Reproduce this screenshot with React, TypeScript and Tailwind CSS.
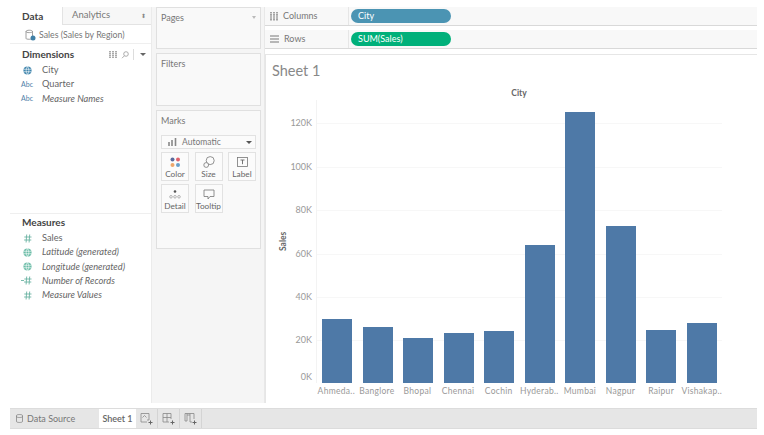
const font = { fontFamily: 'Lato, "Open Sans", "Liberation Sans", sans-serif' };

const bars = [
  { name: "Ahmeda..", top: 319 },
  { name: "Banglore", top: 327 },
  { name: "Bhopal", top: 338 },
  { name: "Chennai", top: 333 },
  { name: "Cochin", top: 331 },
  { name: "Hyderab..", top: 245 },
  { name: "Mumbai", top: 112 },
  { name: "Nagpur", top: 226 },
  { name: "Raipur", top: 330 },
  { name: "Vishakap..", top: 323 },
];

const ticks = [
  { label: "120K", y: 23 },
  { label: "100K", y: 67 },
  { label: "80K", y: 110 },
  { label: "60K", y: 154 },
  { label: "40K", y: 197 },
  { label: "20K", y: 240 },
  { label: "0K", y: 277 },
];

const Globe = ({ color }: { color: string }) => (
  <svg width="9" height="9" viewBox="0 0 10 10" className="shrink-0">
    <circle cx="5" cy="5" r="4.5" fill={color} />
    <path d="M0.8 3.6H9.2M0.8 6.4H9.2M5 .5C3 3 3 7 5 9.5M5 .5C7 3 7 7 5 9.5" stroke="#fff" strokeWidth="0.7" fill="none" />
  </svg>
);

const Hash = ({ prefix }: { prefix?: boolean }) => (
  <svg width="13" height="9" viewBox="0 0 13 9" className="shrink-0">
    <path d="M5.7 .5 5.1 8.5M8.7 .5 8.1 8.5M3.3 3H10.5M3.1 6H10.3" stroke="#6bb3a3" strokeWidth="0.9" fill="none" />
    {prefix && <path d="M0 4.5H3" stroke="#6bb3a3" strokeWidth="0.9" />}
  </svg>
);

const FieldRow = ({ icon, label, italic }: { icon: React.ReactNode; label: string; italic?: boolean }) => (
  <div className="flex h-[14.25px] items-center">
    <div className="flex w-[32px] items-center justify-center pl-[6px] pr-[4px]">{icon}</div>
    <span className={`text-[9.25px] text-[#666] ${italic ? "italic" : ""}`}>{label}</span>
  </div>
);

const Abc = () => <span className="text-[7px] text-[#4f81a8]">Abc</span>;

const MarkButton = ({ icon, label }: { icon: React.ReactNode; label: string }) => (
  <div className="flex h-[29px] w-[28px] flex-col items-center justify-between border border-[#e2e2e2] bg-[#fbfbfb] pb-[1px] pt-[3px]">
    <div className="flex h-[12px] items-center">{icon}</div>
    <span className="text-[8.25px] leading-[10px] text-[#666]">{label}</span>
  </div>
);

const Shelf = ({ icon, title, pill, color }: { icon: React.ReactNode; title: string; pill: string; color: string }) => (
  <div className="flex h-[19px] items-center border-b border-[#d9d9d9] bg-[#f8f8f8]">
    <div className="flex h-full w-[84px] items-center gap-[5px] border-r border-[#e6e6e6] pl-[5px]">
      {icon}
      <span className="text-[9px] text-[#777]">{title}</span>
    </div>
    <div
      className="ml-[2px] flex h-[14px] w-[100px] items-center rounded-full pl-[7px] text-[9px] text-white"
      style={{ backgroundColor: color }}
    >
      {pill}
    </div>
  </div>
);

const ShelfPanel = ({ title, className, children }: { title: string; className: string; children?: React.ReactNode }) => (
  <div className={`border border-[#e0e0e0] bg-[#f9f9f9] ${className}`}>
    <div className="pl-[4px] pt-[4px] text-[9px] leading-[11px] text-[#777]">{title}</div>
    {children}
  </div>
);

const TabIcon = ({ d }: { d: string }) => (
  <div className="flex h-full w-[22px] items-center justify-center border-r border-[#d4d4d4]">
    <svg width="13" height="13" viewBox="0 0 13 13" fill="none">
      <path d={d} stroke="#888" strokeWidth="0.8" />
      <path d="M8.5 10.5H12.5M10.5 8.5V12.5" stroke="#666" strokeWidth="1" />
    </svg>
  </div>
);

const App = () => {
  return (
    <div className="flex h-[435px] w-[764px] flex-col overflow-hidden bg-white pb-[6px] pl-[10px] pr-[7px] pt-[7px]" style={font}>
      <div className="flex min-h-0 flex-1">
        {/* data pane */}
        <div className="flex w-[142px] shrink-0 flex-col border-r border-[#ebebeb]">
          <div className="flex h-[18px] shrink-0">
            <div className="flex w-[52px] items-center pl-[12px] text-[10px] font-bold text-[#444]">Data</div>
            <div className="flex flex-1 items-center justify-between border-b border-l border-[#e3e3e3] bg-[#f7f7f7] pl-[9px] pr-[5px] text-[9.5px] text-[#777]">
              Analytics
              <span className="text-[6px] leading-[6px] text-[#888]">⬍</span>
            </div>
          </div>
          <div className="flex h-[19px] shrink-0 items-center gap-[3px] border-b border-[#efefef] pl-[15px] pt-[1px]">
            <svg width="11" height="12" viewBox="0 0 11 12" fill="none">
              <path d="M1 2.5C1 .8 7.5 .8 7.5 2.5V9.5C7.5 10.5 1 10.5 1 9.5ZM1 2.5C1 4 7.5 4 7.5 2.5" stroke="#888" strokeWidth="0.8" />
              <circle cx="8" cy="9" r="2.5" fill="#3f7fa6" />
            </svg>
            <span className="text-[8.75px] text-[#777]">Sales (Sales by Region)</span>
          </div>
          <div className="flex h-[170px] shrink-0 flex-col border-b border-[#efefef]">
            <div className="flex h-[18px] items-end justify-between pb-[2px] pl-[12px] pr-[5px]">
              <span className="text-[10px] font-bold leading-[12px] text-[#444]">Dimensions</span>
              <div className="flex items-center gap-[4px]">
                <svg width="8" height="7" viewBox="0 0 8 7" fill="none">
                  <path d="M1 0V7M4 0V7M7 0V7" stroke="#888" strokeWidth="1.4" strokeDasharray="1.4 .6" />
                </svg>
                <svg width="8" height="8" viewBox="0 0 8 8" fill="none">
                  <circle cx="5" cy="3" r="2.3" stroke="#999" strokeWidth="0.8" />
                  <path d="M3.4 4.8 1 7.2" stroke="#999" strokeWidth="0.8" />
                </svg>
                <div className="h-[11px] w-px bg-[#ddd]" />
                <div className="ml-[2px] h-0 w-0 border-x-[3px] border-t-[3px] border-x-transparent border-t-[#666]" />
              </div>
            </div>
            <div className="pt-[1px]">
              <FieldRow icon={<Globe color="#3f85ad" />} label="City" />
              <FieldRow icon={<Abc />} label="Quarter" />
              <FieldRow icon={<Abc />} label="Measure Names" italic />
            </div>
          </div>
          <div className="pl-[12px] pt-[2px] text-[10px] font-bold leading-[12px] text-[#444]">Measures</div>
          <div className="pt-[3px]">
            <FieldRow icon={<Hash />} label="Sales" />
            <FieldRow icon={<Globe color="#6cbda8" />} label="Latitude (generated)" italic />
            <FieldRow icon={<Globe color="#6cbda8" />} label="Longitude (generated)" italic />
            <FieldRow icon={<Hash prefix />} label="Number of Records" italic />
            <FieldRow icon={<Hash />} label="Measure Values" italic />
          </div>
        </div>

        {/* cards column */}
        <div className="flex w-[113px] shrink-0 flex-col gap-[4px] border-r border-[#e8e8e8] bg-[#f5f5f5] pl-[4px] pr-[3px]">
          <ShelfPanel title="Pages" className="relative h-[42px]">
            <div className="absolute right-[4px] top-[8px] h-0 w-0 border-x-[2.5px] border-t-[3px] border-x-transparent border-t-[#bbb]" />
          </ShelfPanel>
          <ShelfPanel title="Filters" className="h-[53px]" />
          <ShelfPanel title="Marks" className="h-[139px]">
            <div className="flex flex-col gap-[3px] px-[4px] pt-[9px]">
              <div className="flex h-[14px] items-center border border-[#e2e2e2] bg-[#fbfbfb] pl-[6px] pr-[3px]">
                <svg width="10" height="8" viewBox="0 0 10 8" fill="none">
                  <path d="M1 4V8M4 2V8M7.5 0V8" stroke="#888" strokeWidth="1.6" />
                </svg>
                <span className="ml-[4px] flex-1 text-[8.5px] text-[#777]">Automatic</span>
                <div className="h-0 w-0 border-x-[3px] border-t-[3px] border-x-transparent border-t-[#555]" />
              </div>
              <div className="grid grid-cols-[28px_28px_28px] justify-between gap-y-[3px]">
                <MarkButton
                  label="Color"
                  icon={
                    <svg width="11" height="11" viewBox="0 0 11 11">
                      <circle cx="2.5" cy="2.5" r="2" fill="#5c6a9c" />
                      <circle cx="8" cy="2.5" r="2" fill="#e0626b" />
                      <circle cx="2.5" cy="8" r="2" fill="#eda66a" />
                      <circle cx="8" cy="8" r="2" fill="#6a9fc9" />
                    </svg>
                  }
                />
                <MarkButton
                  label="Size"
                  icon={
                    <svg width="12" height="12" viewBox="0 0 12 12" fill="none">
                      <circle cx="7.2" cy="4.6" r="4" stroke="#777" strokeWidth="0.8" />
                      <circle cx="3.2" cy="9" r="2.4" stroke="#777" strokeWidth="0.8" fill="#fbfbfb" />
                    </svg>
                  }
                />
                <MarkButton
                  label="Label"
                  icon={
                    <svg width="11" height="10" viewBox="0 0 11 10" fill="none">
                      <rect x=".5" y=".5" width="10" height="9" stroke="#777" strokeWidth="0.8" />
                      <path d="M3.5 3H7.5M5.5 3V7.2" stroke="#666" strokeWidth="0.9" />
                    </svg>
                  }
                />
                <MarkButton
                  label="Detail"
                  icon={
                    <svg width="12" height="9" viewBox="0 0 12 9" fill="none">
                      <circle cx="6" cy="1.5" r="1.3" fill="#555" />
                      <circle cx="2" cy="6.8" r="1.3" stroke="#888" strokeWidth="0.6" />
                      <circle cx="6" cy="6.8" r="1.3" stroke="#888" strokeWidth="0.6" />
                      <circle cx="10" cy="6.8" r="1.3" stroke="#888" strokeWidth="0.6" />
                    </svg>
                  }
                />
                <MarkButton
                  label="Tooltip"
                  icon={
                    <svg width="12" height="11" viewBox="0 0 12 11" fill="none">
                      <path d="M1 1H11V7.5H7L5 10V7.5H1Z" stroke="#777" strokeWidth="0.8" />
                    </svg>
                  }
                />
              </div>
            </div>
          </ShelfPanel>
        </div>

        {/* worksheet */}
        <div className="flex min-w-0 flex-1 flex-col">
          <div className="flex flex-col gap-[4px]">
            <Shelf
              title="Columns"
              pill="City"
              color="#4b94b3"
              icon={
                <svg width="8" height="9" viewBox="0 0 8 9" fill="none">
                  <path d="M1 0V9M4 0V9M7 0V9" stroke="#777" strokeWidth="1.3" strokeDasharray="1.6 .5" />
                </svg>
              }
            />
            <Shelf
              title="Rows"
              pill="SUM(Sales)"
              color="#00b07a"
              icon={
                <svg width="9" height="8" viewBox="0 0 9 8" fill="none">
                  <path d="M0 1H9M0 4H9M0 7H9" stroke="#777" strokeWidth="1.1" />
                </svg>
              }
            />
          </div>
          <div className="mt-[5px] flex flex-1 flex-col border-l border-t border-[#e6e6e6] pl-[6px]">
            <div className="h-[30px] pt-[7px] text-[14.5px] leading-[18px] text-[#888]">Sheet 1</div>
            <div className="w-[494px] pt-[3px] text-center text-[8.5px] font-bold leading-[11px] text-[#666]">City</div>
            <div className="mt-[1px] flex h-[283px]">
              <div className="flex w-[18px] items-center justify-end">
                <span className="translate-x-[3px] -rotate-90 text-[8.5px] font-bold text-[#666]">Sales</span>
              </div>
              <div className="relative w-[22px] text-[9px] text-[#999]">
                {ticks.map((t) => (
                  <span key={t.label} className="absolute right-0 -translate-y-1/2" style={{ top: t.y }}>
                    {t.label}
                  </span>
                ))}
              </div>
              <div className="relative ml-[4px] w-[406px] border-l border-[#f3f3f3]">
                {ticks.slice(0, 6).map((t) => (
                  <div key={t.label} className="absolute inset-x-0 h-px bg-[#f7f7f7]" style={{ top: t.y }} />
                ))}
                <div className="relative grid h-full grid-cols-10">
                  {bars.map((b) => (
                    <div key={b.name} className="flex items-end justify-center">
                      <div className="w-[30px] bg-[#4e79a7]" style={{ height: 383 - b.top }} />
                    </div>
                  ))}
                </div>
              </div>
            </div>
            <div className="ml-[44px] grid w-[406px] grid-cols-10 pt-[2px]">
              {bars.map((b) => (
                <span key={b.name} className="whitespace-nowrap text-center text-[8.5px] leading-[12px] tracking-[0.3px] text-[#999]">
                  {b.name}
                </span>
              ))}
            </div>
          </div>
        </div>
      </div>

      {/* tab bar */}
      <div className="mt-[5px] flex h-[21px] shrink-0 items-center border-y border-[#dcdcdc] bg-[#e6e6e6]">
        <div className="flex h-full w-[89px] items-center gap-[4px] pl-[6px] text-[9px] text-[#777]">
          <svg width="7" height="9" viewBox="0 0 7 9" fill="none">
            <path d="M.5 1.5C.5 .2 6.5 .2 6.5 1.5V7.5C6.5 8.8 .5 8.8 .5 7.5ZM.5 2.6C.5 3.8 6.5 3.8 6.5 2.6" stroke="#777" strokeWidth="0.7" />
          </svg>
          Data Source
        </div>
        <div className="flex h-full w-[37px] items-center justify-center bg-white text-[9px] font-semibold text-[#666]">Sheet 1</div>
        <TabIcon d="M1 1.5H9V8H7M1 1.5V10H7M2.5 5.5 4.5 3.5 6.5 5.5" />
        <TabIcon d="M1 1.5H9V7M1 1.5V10H7M1 5.5H9M5 1.5V10" />
        <TabIcon d="M1 1.5H10V7M1 1.5V9H3V3M6 1.5V10H8M3 1.5V3H6" />
      </div>
    </div>
  );
};

export default App;
